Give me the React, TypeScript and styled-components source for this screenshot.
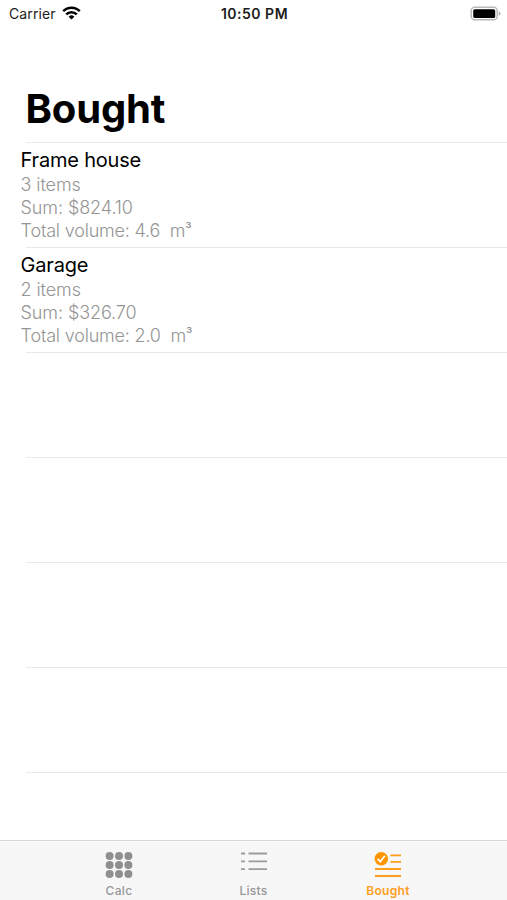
import React from 'react';
import styled, { createGlobalStyle } from 'styled-components';

const GlobalStyle = createGlobalStyle`
  * { box-sizing: border-box; }
  body { margin: 0; background: #fff; font-family: Inter, "Liberation Sans", sans-serif; }
`;

const Screen = styled.div`
  width: 507px;
  height: 900px;
  display: flex;
  flex-direction: column;
  overflow: hidden;
  background: #fff;
`;

const StatusBar = styled.header`
  height: 28px;
  flex: none;
  display: grid;
  grid-template-columns: 1fr auto 1fr;
  align-items: center;
  padding: 0 6px 0 9px;
  color: #1c1c1c;
`;

const Carrier = styled.div`
  display: flex;
  align-items: center;
  gap: 6px;
  font-size: 14px;
  line-height: 20px;
  letter-spacing: 0.1px;

  svg { margin-top: -2px; }
`;

const Clock = styled.time`
  font-size: 14px;
  line-height: 20px;
  font-weight: 600;
  letter-spacing: 0.5px;
  margin-right: 1px;
`;

const BatterySlot = styled.div`
  display: flex;
  justify-content: flex-end;

  svg { margin-top: -2px; }
`;

const Title = styled.h1`
  margin: 0;
  flex: none;
  height: 114px;
  padding: 56px 0 0 25.5px;
  font-size: 40px;
  line-height: 50px;
  font-weight: 700;
  letter-spacing: -0.15px;
  color: #000;
`;

const List = styled.ul`
  flex: 1;
  min-height: 0;
  margin: 0;
  padding: 0;
  list-style: none;
  overflow: hidden;
`;

const Row = styled.li`
  height: 105px;
  padding: 5px 0 0 20.6px;
  background: linear-gradient(#e9e9e9, #e9e9e9) 26px 0 / 100% 1px no-repeat;
`;

const RowTitle = styled.div`
  font-size: 20px;
  line-height: 26px;
  letter-spacing: -0.2px;
  color: #000;
`;

const RowDetail = styled.div<{ $tight?: boolean }>`
  font-size: 18px;
  line-height: 23px;
  font-weight: 300;
  letter-spacing: ${(p) => (p.$tight ? '-0.2px' : '-0.1px')};
  color: #959595;
  white-space: pre;
`;

const Exponent = styled.span`
  display: inline-block;
  font-size: 14px;
  line-height: 14px;
  font-weight: 400;
  transform: translateY(-3px);
`;

const TabBar = styled.nav`
  flex: none;
  height: 60px;
  display: grid;
  grid-template-columns: repeat(3, 134.5px);
  justify-content: center;
  border-top: 1px solid #d8d8d8;
  background: #f7f7f7;
`;

const Tab = styled.button<{ $active?: boolean }>`
  display: flex;
  flex-direction: column;
  align-items: center;
  padding: 10px 0 0;
  border: 0;
  background: none;
  font-family: inherit;
  font-size: 12px;
  line-height: 16px;
  font-weight: ${(p) => (p.$active ? 600 : 500)};
  letter-spacing: 0.3px;
  color: ${(p) => (p.$active ? '#ff9d1c' : '#969696')};

  svg { display: block; margin-bottom: 4px; }
`;

const WifiIcon = () => (
  <svg width="19" height="14" viewBox="0 0 19 14" fill="none" stroke="#000" strokeWidth="2.4">
    <path d="M1.2 5.2a11.7 11.7 0 0 1 16.6 0" />
    <path d="M4.2 8.4a7.5 7.5 0 0 1 10.6 0" />
    <path d="M9.5 13.6 6.6 10.7a4.1 4.1 0 0 1 5.8 0z" fill="#000" stroke="none" />
  </svg>
);

const BatteryIcon = () => (
  <svg width="31" height="15" viewBox="0 0 31 15">
    <rect x="1.2" y="1.2" width="26" height="12.6" rx="3.6" fill="#fff" stroke="#b9b9b9" strokeWidth="1.5" />
    <rect x="3.2" y="3.2" width="22" height="8.8" rx="1.6" fill="#000" />
    <path d="M28.8 5.3q1.7.7 1.7 2.2t-1.7 2.2z" fill="#ababab" />
  </svg>
);

const CalcIcon = () => (
  <svg width="28" height="28" viewBox="0 0 28 28" fill="#8f8f8f">
    {[5, 14, 23].map((y) => [4.6, 14, 23.4].map((x) => <circle key={`${x}-${y}`} cx={x} cy={y} r="4" />))}
  </svg>
);

const ListsIcon = () => (
  <svg width="28" height="28" viewBox="0 0 28 28" stroke="#9c9c9c" strokeWidth="1.8">
    <path d="M1 2.5h4M8.5 2.5H27M1 10.4h4M8.5 10.4H27M1 18.2h4M8.5 18.2H27" />
  </svg>
);

const BoughtIcon = () => (
  <svg width="28" height="28" viewBox="0 0 28 28" fill="none" stroke="#ff9d1c" strokeWidth="1.9">
    <circle cx="7.3" cy="7.8" r="6.8" fill="#ff9500" stroke="none" />
    <path d="m3.7 7.8 2.6 2.8 4.6-5.8" stroke="#fff" strokeWidth="1.7" />
    <path d="M16.5 4.4h10.5M16.5 10.9h10.5M1 18h26M1 25h26" />
  </svg>
);

const projects = [
  { name: 'Frame house', count: 3, sum: '$824.10', volume: '4.6' },
  { name: 'Garage', count: 2, sum: '$326.70', volume: '2.0' },
];

export default function App() {
  return (
    <Screen>
      <GlobalStyle />
      <StatusBar>
        <Carrier><span>Carrier</span><WifiIcon /></Carrier>
        <Clock>10:50 PM</Clock>
        <BatterySlot><BatteryIcon /></BatterySlot>
      </StatusBar>
      <Title>Bought</Title>
      <List>
        {projects.map((p) => (
          <Row key={p.name}>
            <RowTitle>{p.name}</RowTitle>
            <RowDetail>{p.count} items</RowDetail>
            <RowDetail>Sum: {p.sum}</RowDetail>
            <RowDetail $tight>
              {`Total volume: ${p.volume}  m`}
              <Exponent>³</Exponent>
            </RowDetail>
          </Row>
        ))}
        {Array.from({ length: 5 }, (_, i) => <Row key={i} />)}
      </List>
      <TabBar>
        <Tab><CalcIcon />Calc</Tab>
        <Tab><ListsIcon />Lists</Tab>
        <Tab $active><BoughtIcon />Bought</Tab>
      </TabBar>
    </Screen>
  );
}
